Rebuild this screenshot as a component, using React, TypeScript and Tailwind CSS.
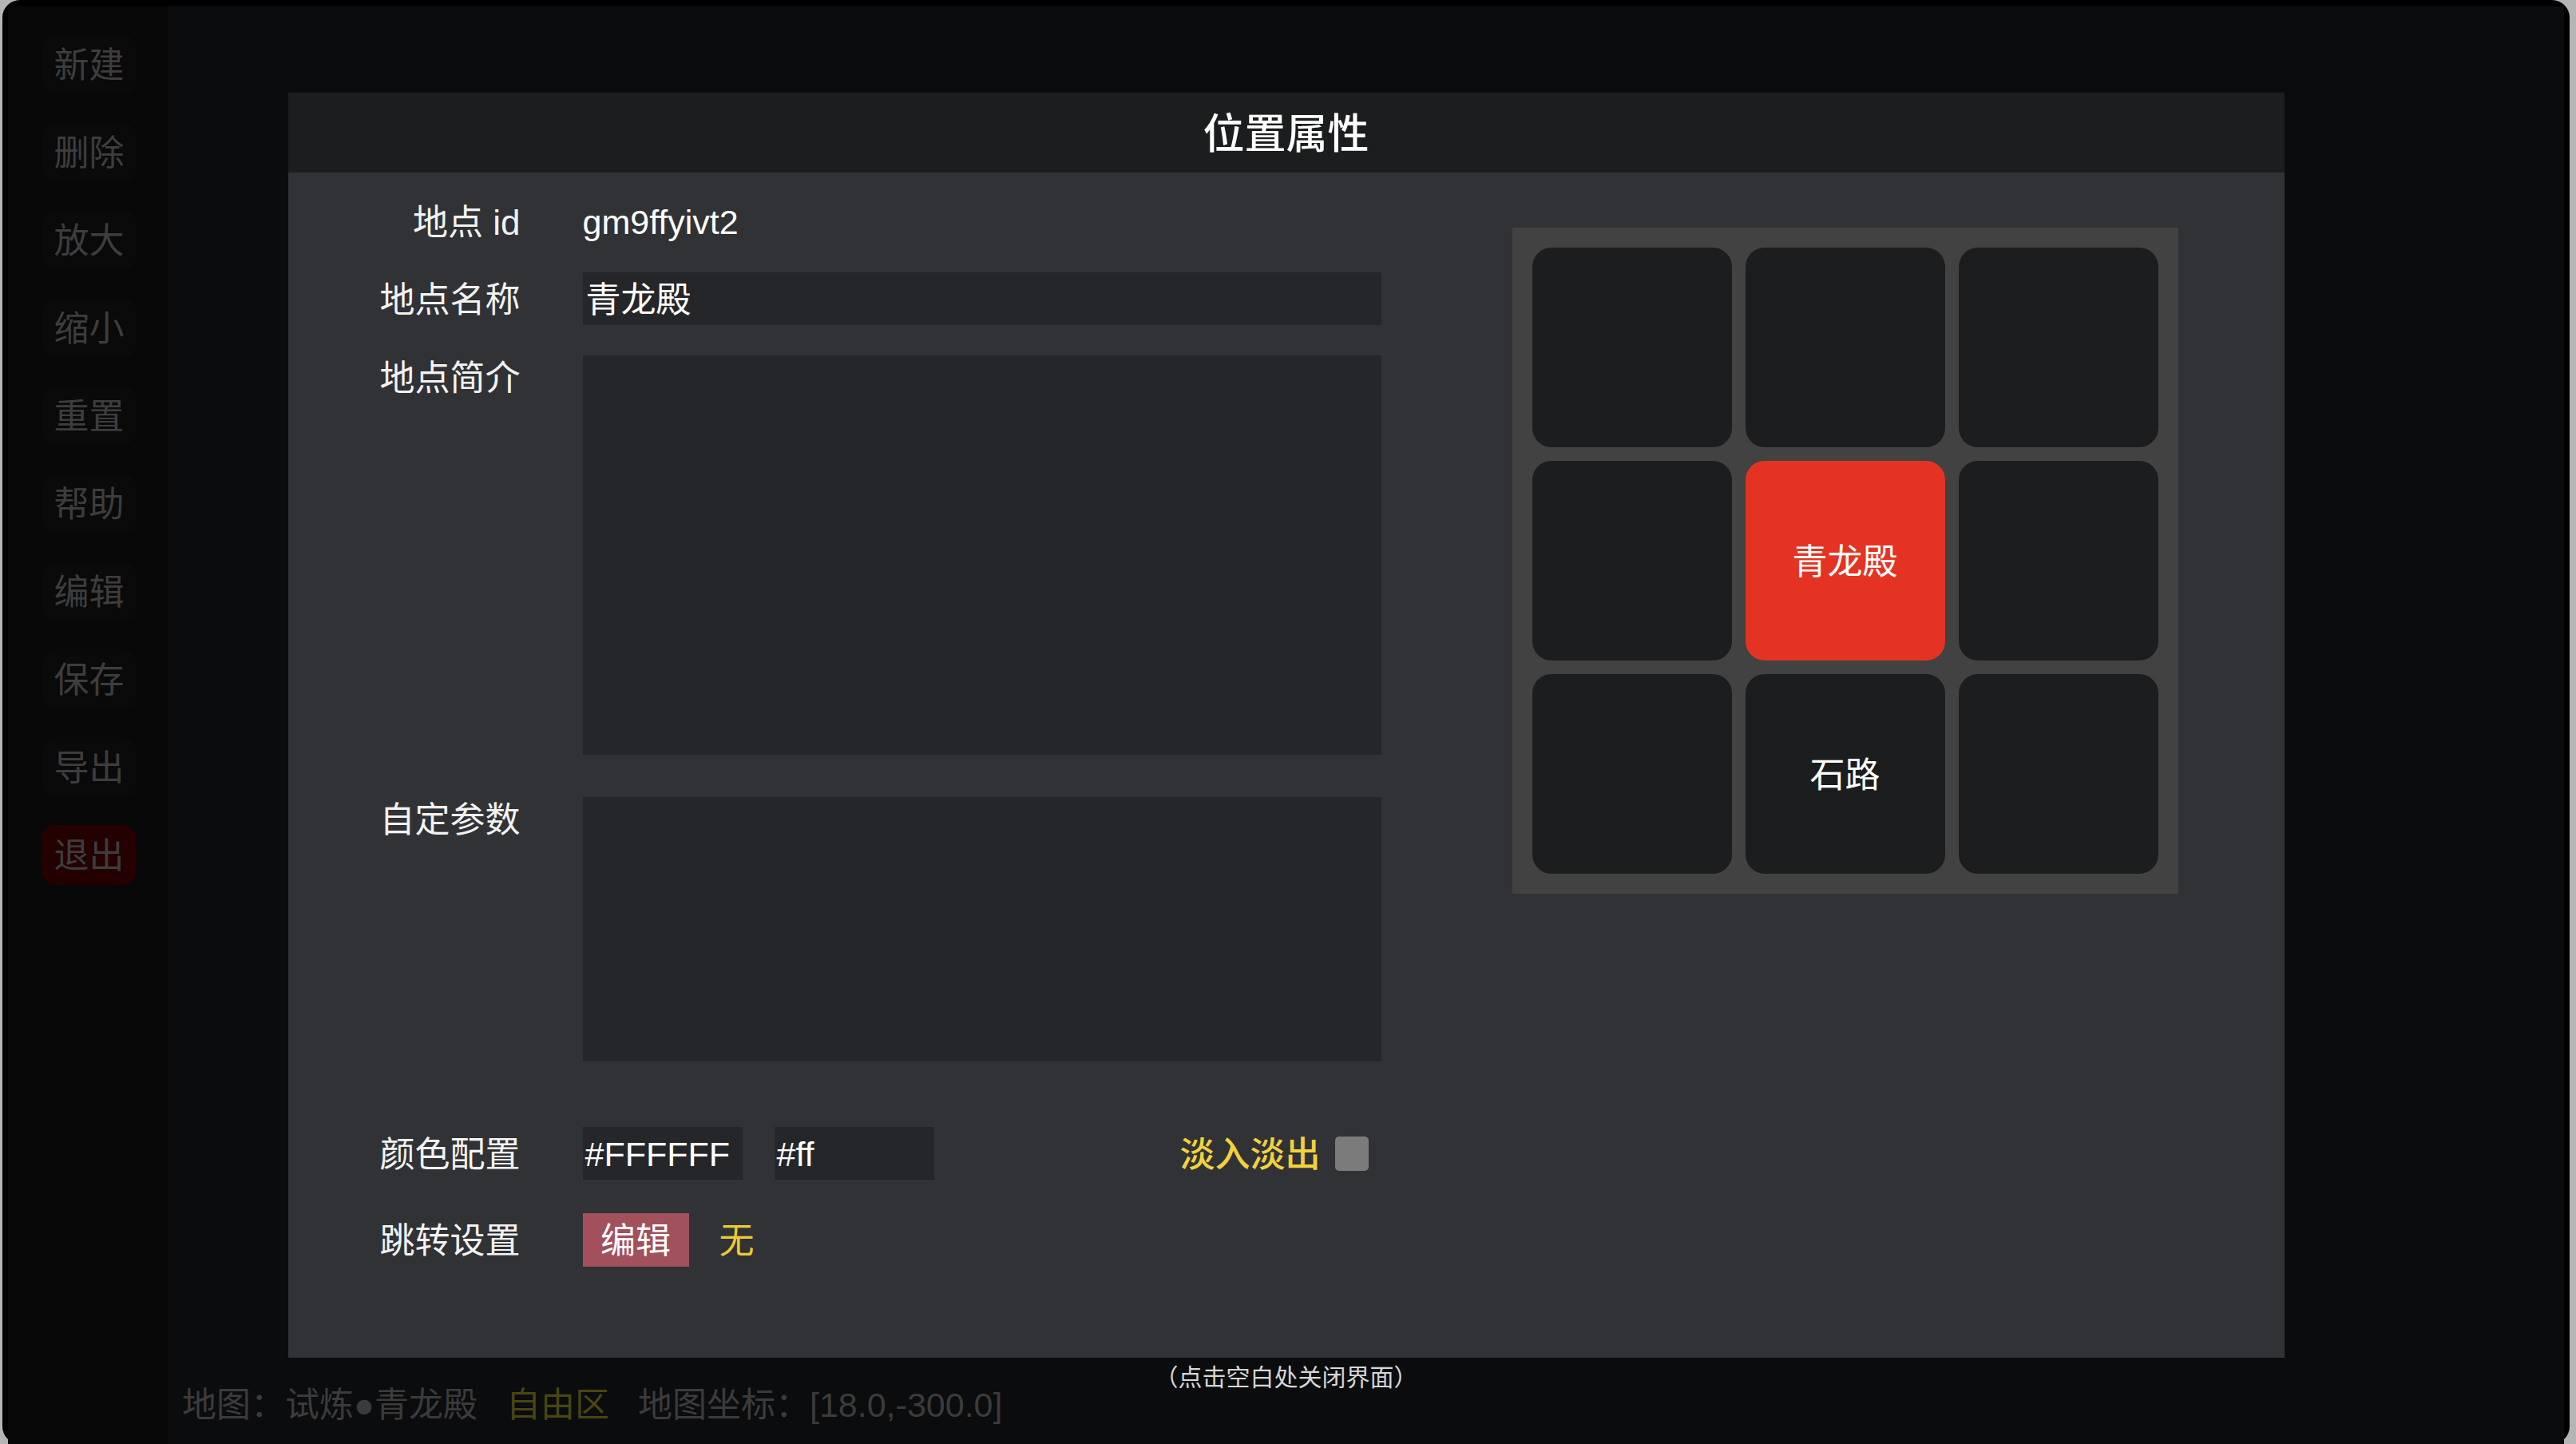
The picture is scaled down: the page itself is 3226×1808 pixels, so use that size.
import React from 'react';

const sideItems = ['新建', '删除', '放大', '缩小', '重置', '帮助', '编辑', '保存', '导出', '退出'];

const cells = ['', '', '', '', '青龙殿', '', '', '石路', ''];

const Label = ({ children, top }: { children: React.ReactNode; top?: boolean }) => (
  <div
    className={
      'w-[180px] shrink-0 pt-[3px] text-right text-[44px] text-[#f2f2f2] ' +
      (top ? 'leading-[52px]' : 'leading-none')
    }
  >
    {children}
  </div>
);

const Sidebar = () => (
  <div className="flex w-[201px] shrink-0 flex-col gap-[35px] bg-[#080808] pl-[42px] pt-[35px]">
    {sideItems.map((item) => (
      <div
        key={item}
        className={
          'flex h-[75px] w-[119px] items-center justify-center rounded-[18px] pt-[3px] text-[44px] leading-none text-[#3d3d3d] ' +
          (item === '退出' ? 'bg-[#240000]' : 'bg-[#0a0a0a]')
        }
      >
        {item}
      </div>
    ))}
  </div>
);

const PlaceDialog = () => (
  <div className="flex h-[1584px] w-[2500px] flex-col">
    {/* header */}
    <div className="flex h-[100px] items-center justify-center bg-[#1c1d1f] pt-[3px] text-[52px] font-medium leading-none text-white">
      位置属性
    </div>

    {/* body */}
    <div className="flex flex-1 bg-[#313236]">
      {/* form */}
      <div className="flex w-[1369px] flex-col pl-[111px] pt-[28px]">
        <div className="flex h-[66px] items-center">
          <Label>地点 id</Label>
          <div className="ml-[78px] pt-[3px] text-[43px] leading-none text-white">gm9ffyivt2</div>
        </div>

        <div className="mt-[31px] flex h-[66px] items-center">
          <Label>地点名称</Label>
          <div className="ml-[78px] flex h-full w-[1000px] items-center bg-[#25262a] px-[4px] pt-[3px] text-[44px] leading-none text-white">
            青龙殿
          </div>
        </div>

        <div className="mt-[38px] flex items-start">
          <Label top>地点简介</Label>
          <div className="ml-[78px] h-[500px] w-[1000px] bg-[#25262a]" />
        </div>

        <div className="mt-[53px] flex items-start">
          <Label top>自定参数</Label>
          <div className="ml-[78px] h-[331px] w-[1000px] bg-[#25262a]" />
        </div>

        <div className="mt-[82px] flex h-[66px] items-center">
          <Label>颜色配置</Label>
          <div className="ml-[78px] flex h-full w-[1000px] items-center">
            <div className="flex h-full w-[200px] items-center bg-[#25262a] px-[3px] pt-[2px] text-[43px] leading-none text-white">
              #FFFFFF
            </div>
            <div className="ml-[40px] flex h-full w-[200px] items-center bg-[#25262a] px-[3px] pt-[2px] text-[43px] leading-none text-white">
              #ff
            </div>
            <div className="ml-auto flex items-center pr-[16px]">
              <span className="pt-[3px] text-[44px] font-medium leading-none text-[#f0d23c]">淡入淡出</span>
              <span className="ml-[18px] h-[43px] w-[42px] rounded-[5px] bg-[#7b7b7b]" />
            </div>
          </div>
        </div>

        <div className="mt-[42px] flex h-[67px] items-center">
          <Label>跳转设置</Label>
          <div className="ml-[78px] flex h-full w-[133px] items-center justify-center bg-[#a2505b] pt-[3px] text-[44px] leading-none text-white">
            编辑
          </div>
          <div className="ml-[38px] pt-[3px] text-[44px] leading-none text-[#ecc935]">无</div>
        </div>
      </div>

      {/* position preview grid */}
      <div className="ml-[164px] mt-[69px] grid h-[834px] w-[834px] grid-cols-3 grid-rows-3 gap-[17px] bg-[#424242] p-[25px]">
        {cells.map((name, i) => (
          <div
            key={i}
            className={
              'flex items-center justify-center rounded-[24px] pt-[3px] text-[44px] leading-none text-white ' +
              (i === 4 ? 'bg-[#e53323]' : 'bg-[#1c1d1f]')
            }
          >
            {name}
          </div>
        ))}
      </div>
    </div>
  </div>
);

export default function App() {
  return (
    <div className="h-[1808px] w-[3226px] overflow-hidden bg-[#b5b5b5] font-['Liberation_Sans','Noto_Sans_CJK_SC',sans-serif]">
      <div className="ml-[3px] mr-[8px] h-full rounded-[22px] bg-black px-[7px] pt-[8px]">
        <div className="relative flex h-full">
          <Sidebar />

          {/* map area */}
          <div className="flex flex-1 flex-col justify-end bg-[#0b0c0e] pb-[27px] pl-[17px]">
            <div className="flex items-center text-[43px] leading-none text-[#3b3b3b]">
              <span>地图：试炼●青龙殿</span>
              <span className="ml-[36px] text-[#4a4511]">自由区</span>
              <span className="ml-[36px]">地图坐标：[18.0,-300.0]</span>
            </div>
          </div>

          {/* dialog overlay */}
          <div className="absolute inset-0 flex flex-col items-center pt-[108px]">
            <PlaceDialog />
            <div className="mt-[10px] text-[30px] leading-none text-[#d6d6d6]">（点击空白处关闭界面）</div>
          </div>
        </div>
      </div>
    </div>
  );
}
